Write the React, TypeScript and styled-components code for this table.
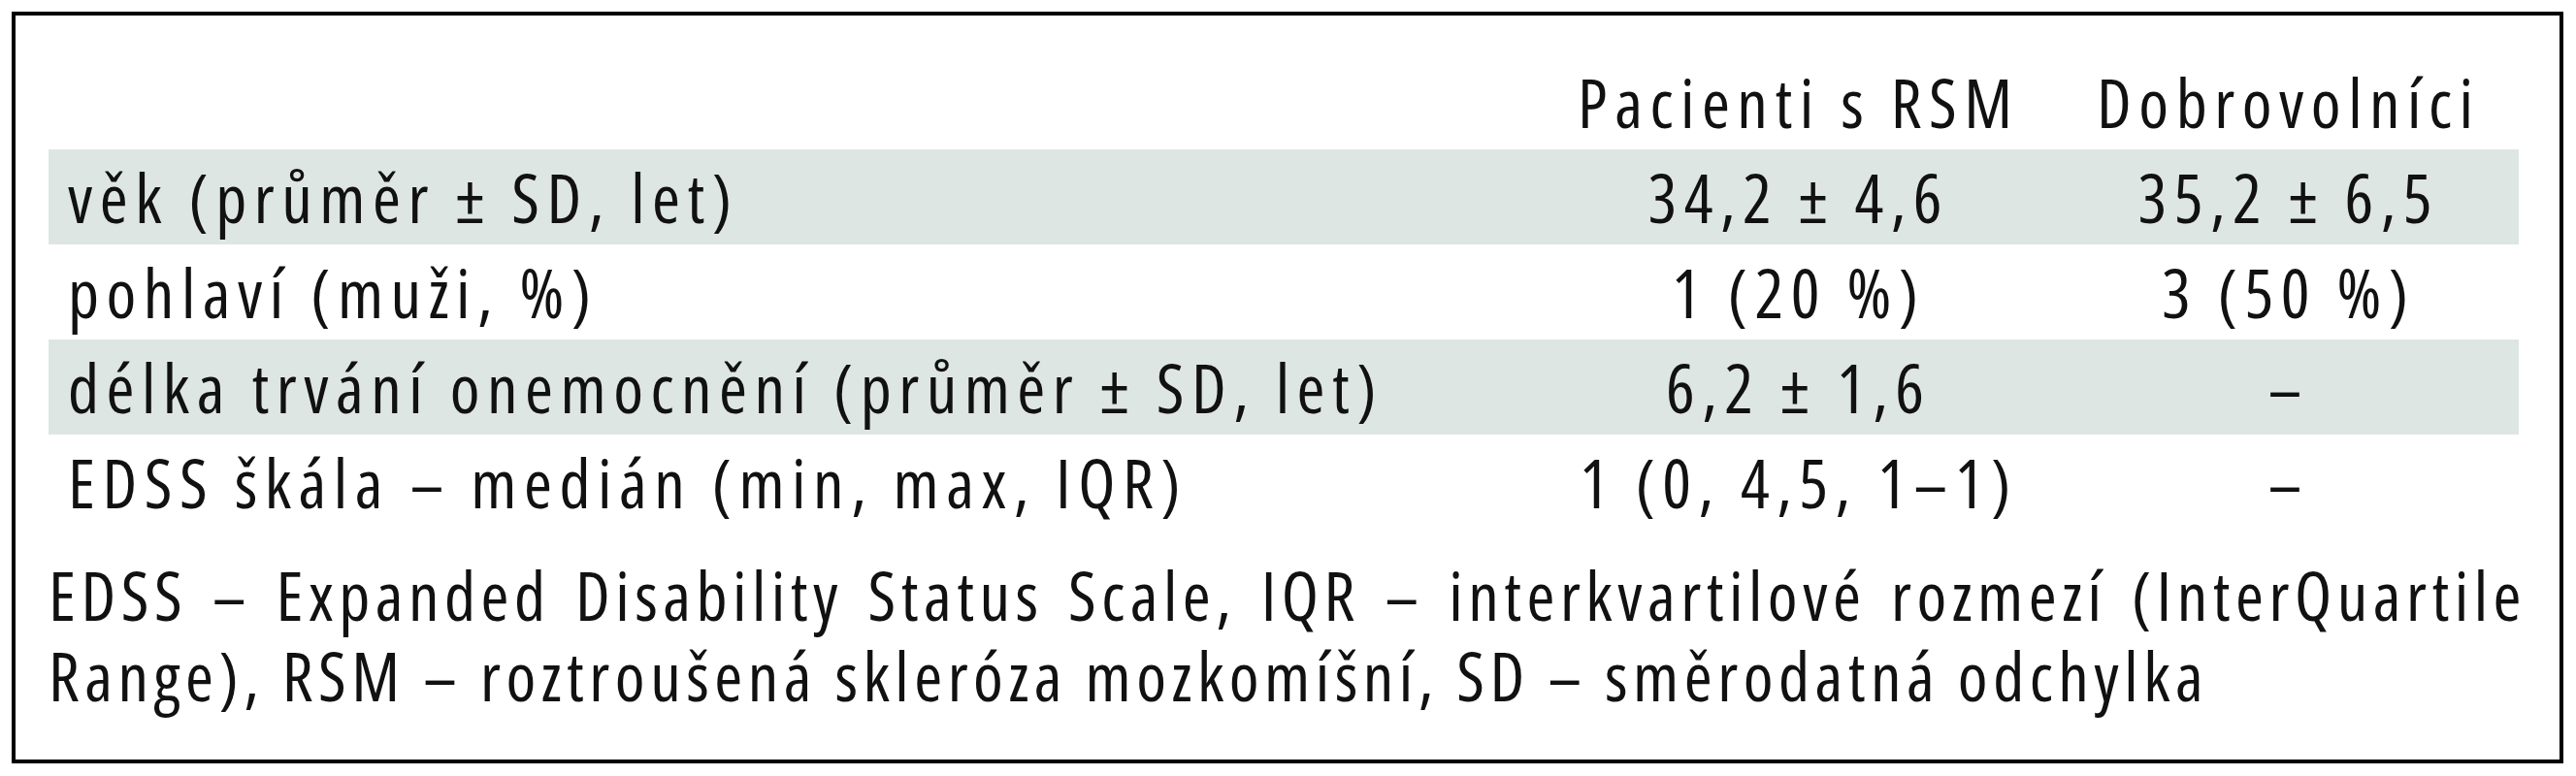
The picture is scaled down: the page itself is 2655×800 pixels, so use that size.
import styled, { createGlobalStyle } from 'styled-components';

const GlobalStyle = createGlobalStyle`
  body {
    margin: 0;
    background: #fff;
    color: #111;
    font-family: 'Open Sans', 'Noto Sans', sans-serif;
    font-stretch: condensed;
  }
`;

const Frame = styled.div`
  box-sizing: border-box;
  width: 2630px;
  height: 775px;
  margin: 12px;
  padding: 40px 34px 0;
  border: 4px solid #000;
`;

const Table = styled.div`
  display: grid;
  grid-template-columns: 1536px 528px 482px;
  margin-right: 8px;
  font-size: 70px;
  letter-spacing: 7.5px;
`;

const Cell = styled.div<{ $align?: 'left' | 'center'; $shaded?: boolean }>`
  height: 98px;
  display: flex;
  align-items: center;
  justify-content: ${(p) => (p.$align === 'left' ? 'flex-start' : 'center')};
  /* letter-spacing leaves a trailing gap, so centred cells get the same on the left */
  padding-left: ${(p) => (p.$align === 'left' ? '20px' : '7.5px')};
  background: ${(p) => (p.$shaded ? '#dee6e3' : 'transparent')};
  white-space: nowrap;
`;

const Note = styled.p`
  margin: 26px 0 0;
  font-size: 70px;
  line-height: 83px;
  letter-spacing: 5.5px;
`;

const NoteLine = styled.span<{ $justify?: boolean }>`
  display: block;
  white-space: nowrap;
  text-align: ${(p) => (p.$justify ? 'justify' : 'left')};
  text-align-last: ${(p) => (p.$justify ? 'justify' : 'left')};
`;

const rows = [
  { label: 'věk (průměr ± SD, let)', rsm: '34,2 ± 4,6', vol: '35,2 ± 6,5' },
  { label: 'pohlaví (muži, %)', rsm: '1 (20 %)', vol: '3 (50 %)' },
  { label: 'délka trvání onemocnění (průměr ± SD, let)', rsm: '6,2 ± 1,6', vol: '–' },
  { label: 'EDSS škála – medián (min, max, IQR)', rsm: '1 (0, 4,5, 1–1)', vol: '–' },
];

export default function App() {
  return (
    <>
      <GlobalStyle />
      <Frame>
        <Table>
          <Cell $align='left' />
          <Cell>Pacienti s RSM</Cell>
          <Cell>Dobrovolníci</Cell>
          {rows.map((row, i) => {
            const shaded = i % 2 === 0;
            return [
              <Cell key={row.label} $align='left' $shaded={shaded}>
                {row.label}
              </Cell>,
              <Cell key={row.label + 'rsm'} $shaded={shaded}>
                {row.rsm}
              </Cell>,
              <Cell key={row.label + 'vol'} $shaded={shaded}>
                {row.vol}
              </Cell>,
            ];
          })}
        </Table>
        <Note>
          <NoteLine $justify>
            EDSS – Expanded Disability Status Scale, IQR – interkvartilové rozmezí (InterQuartile
          </NoteLine>
          <NoteLine>Range), RSM – roztroušená skleróza mozkomíšní, SD – směrodatná odchylka</NoteLine>
        </Note>
      </Frame>
    </>
  );
}
